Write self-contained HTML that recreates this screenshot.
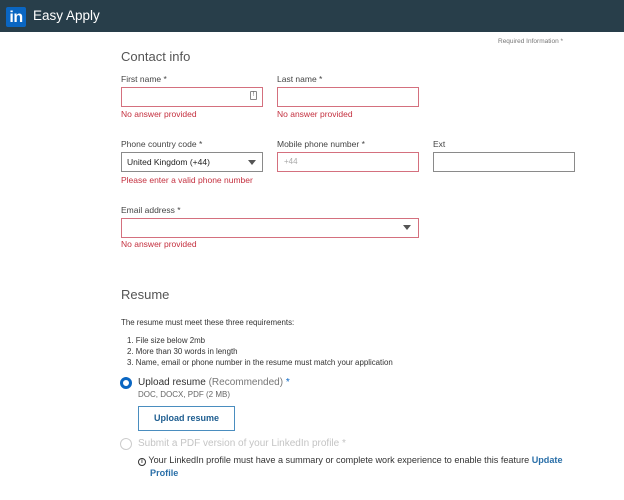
<!DOCTYPE html>
<html><head><style>
*{margin:0;padding:0;box-sizing:border-box}
body{width:624px;height:500px;overflow:hidden;background:#fff;font-family:"Liberation Sans",sans-serif;position:relative;color:#333}
.a{position:absolute;white-space:nowrap}
.hdr{position:absolute;left:0;top:0;width:624px;height:32px;background:#283e4a}
.logo{position:absolute;left:6px;top:7px;width:20px;height:20px;background:#0a66c2;border-radius:2px;color:#fff;font-weight:bold;font-size:16px;line-height:21px;text-align:center;letter-spacing:-0.5px}
.lbl{font-size:8.5px;color:#444}
.err{font-size:8.5px;color:#c4303f}
.box{position:absolute;height:20px;border:1px solid #d4707e;background:#fff}
.box.g{border-color:#8a8a8a}
.h{font-size:13px;color:#555}
.tri{position:absolute;width:0;height:0;border-left:4px solid transparent;border-right:4px solid transparent;border-top:5px solid #555}
.s{font-size:7.9px;color:#333}
</style></head><body>
<div class="hdr"><div class="logo">in</div><div class="a" style="left:33px;top:8px;font-size:13.5px;color:#fff">Easy Apply</div></div>
<div class="a" style="left:498px;top:38px;font-size:6.5px;color:#777">Required Information *</div>
<div class="a h" style="left:121px;top:49px">Contact info</div>

<div class="a lbl" style="left:121px;top:74px">First name *</div>
<div class="box" style="left:121px;top:87px;width:142px"></div>
<div class="a" style="left:250px;top:91px;width:7px;height:9px;border:1px solid #888;border-radius:1px;font-size:6px;line-height:7px;text-align:center;color:#555">!</div>
<div class="a err" style="left:121px;top:109px">No answer provided</div>
<div class="a lbl" style="left:277px;top:74px">Last name *</div>
<div class="box" style="left:277px;top:87px;width:142px"></div>
<div class="a err" style="left:277px;top:109px">No answer provided</div>

<div class="a lbl" style="left:121px;top:139px">Phone country code *</div>
<div class="box g" style="left:121px;top:152px;width:142px"></div>
<div class="a" style="left:127px;top:157px;font-size:8.5px;color:#222">United Kingdom (+44)</div>
<div class="tri" style="left:248px;top:160px"></div>
<div class="a err" style="left:121px;top:175px">Please enter a valid phone number</div>
<div class="a lbl" style="left:277px;top:139px">Mobile phone number *</div>
<div class="box" style="left:277px;top:152px;width:142px"></div>
<div class="a" style="left:284px;top:157px;font-size:8px;color:#aaa">+44</div>
<div class="a lbl" style="left:433px;top:139px">Ext</div>
<div class="box g" style="left:433px;top:152px;width:142px"></div>

<div class="a lbl" style="left:121px;top:205px">Email address *</div>
<div class="box" style="left:121px;top:218px;width:298px"></div>
<div class="tri" style="left:403px;top:225px"></div>
<div class="a err" style="left:121px;top:239px">No answer provided</div>

<div class="a h" style="left:121px;top:287px">Resume</div>
<div class="a s" style="left:121px;top:318px">The resume must meet these three requirements:</div>
<div class="a s" style="left:127px;top:336px">1. File size below 2mb</div>
<div class="a s" style="left:127px;top:347px">2. More than 30 words in length</div>
<div class="a s" style="left:127px;top:358px">3. Name, email or phone number in the resume must match your application</div>

<div class="a" style="left:120px;top:377px;width:12px;height:12px;border-radius:50%;border:3.5px solid #0a66c2;background:#fff"></div>
<div class="a" style="left:138px;top:377px;font-size:10px;color:#333">Upload resume <span style="color:#777">(Recommended)</span> <span style="color:#0a66c2">*</span></div>
<div class="a" style="left:138px;top:390px;font-size:8px;color:#666">DOC, DOCX, PDF (2 MB)</div>
<div class="a" style="left:138px;top:406px;width:97px;height:25px;border:1px solid #4a8dbf;color:#1d5d90;font-weight:bold;font-size:9px;line-height:23px;text-align:center">Upload resume</div>
<div class="a" style="left:120px;top:438px;width:12px;height:12px;border-radius:50%;border:1px solid #ccc"></div>
<div class="a" style="left:138px;top:438px;font-size:10px;color:#c4c4c4">Submit a PDF version of your LinkedIn profile *</div>
<div class="a" style="left:138px;top:455px;font-size:9.1px;color:#333"><span style="display:inline-block;width:8px;height:8px;border:1px solid #333;border-radius:50%;font-size:6px;line-height:6px;text-align:center;vertical-align:0px;font-weight:bold">i</span> Your LinkedIn profile must have a summary or complete work experience to enable this feature <b style="color:#2a6fa8">Update</b></div>
<div class="a" style="left:150px;top:468px;font-size:9.1px;font-weight:bold;color:#2a6fa8">Profile</div>
</body></html>
